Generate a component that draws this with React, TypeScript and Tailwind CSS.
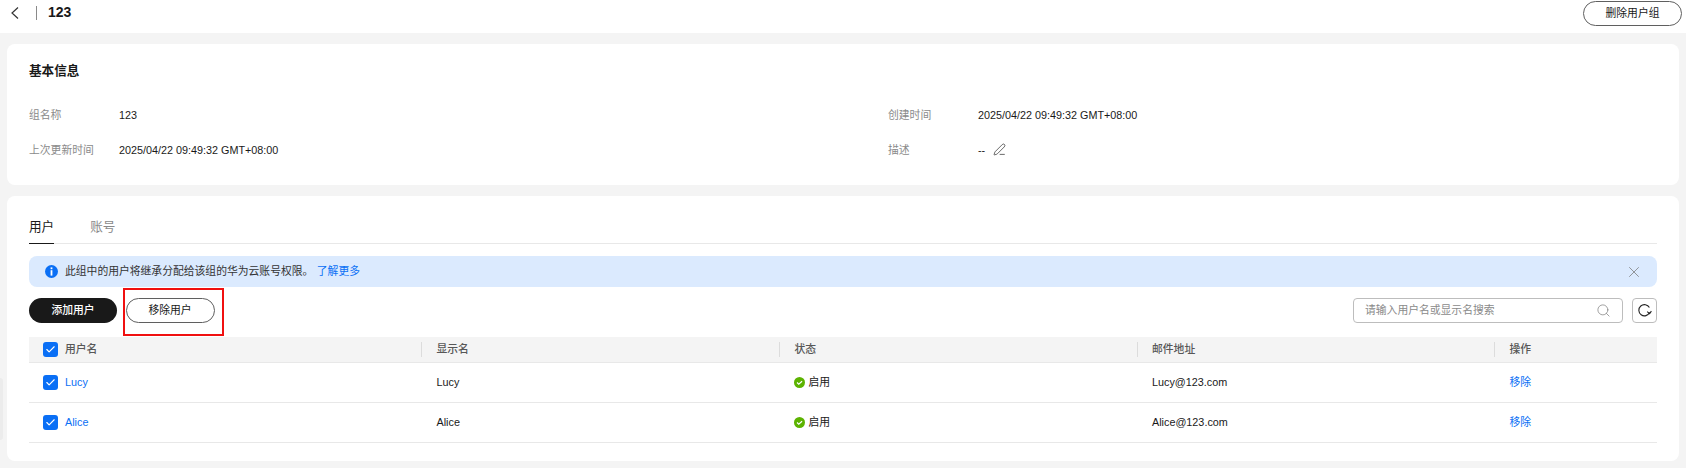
import { X, Search, Check, PenLine } from 'lucide-react';

const rows = [
  { name: 'Lucy', email: 'Lucy@123.com' },
  { name: 'Alice', email: 'Alice@123.com' },
];

const gridCols = 'grid grid-cols-[392px_358px_357.5px_357.5px_1fr]';

const CheckBox = () => (
  <span className="flex h-[15px] w-[15px] items-center justify-center rounded-[3px] bg-[#0a6ff5]">
    <Check size={11} strokeWidth={2.5} className="text-white" />
  </span>
);

const HeaderCell = ({ label }: { label: string }) => (
  <div className="flex h-full items-center">
    <span className="h-[15px] w-px bg-[#dcdcdc]" />
    <span className="pl-[14.5px] font-medium text-[#575757]">{label}</span>
  </div>
);

const InfoDot = () => (
  <svg width="13" height="13" viewBox="0 0 13 13">
    <circle cx="6.5" cy="6.5" r="6.5" fill="#0a6ff5" />
    <rect x="5.6" y="2.4" width="1.8" height="1.8" fill="#fff" />
    <rect x="5.6" y="5.2" width="1.8" height="5.4" fill="#fff" />
  </svg>
);

const StatusDot = () => (
  <svg width="11" height="11" viewBox="0 0 12 12" className="-mt-[1px]">
    <circle cx="6" cy="6" r="6" fill="#5cb300" />
    <path d="M3.3 6 L5.2 7.8 L8.8 4.6" fill="none" stroke="#fff" strokeWidth="1.3" />
  </svg>
);

const RefreshIcon = () => (
  <svg width="15" height="15" viewBox="0 0 15 15" fill="none" stroke="#222" strokeWidth="1.1">
    <path d="M12.6 9.4 A5.6 5.6 0 1 1 12.4 4.6" />
    <path d="M10.2 8.6 L12.6 10.6 L14.4 8.2" />
  </svg>
);

export default function App() {
  return (
    <div className="relative h-[468px] w-[1686px] overflow-hidden bg-[#f4f4f4] font-['Liberation_Sans','Noto_Sans_CJK_SC',sans-serif] text-[10.8px] text-[#191919]">
      {/* faint side handle at the page edge */}
      <span className="absolute left-0 top-[378px] h-[62px] w-[3px] rounded-r bg-[#ececec]" />

      {/* top bar */}
      <div className="flex h-[33px] items-start justify-between bg-white pr-1">
        <div className="flex h-[25px] items-center">
          <svg width="8" height="12" viewBox="0 0 8 12" fill="none" stroke="#333" strokeWidth="1.2" className="ml-[11px]">
            <path d="M7 0.5 L1 6 L7 11.5" />
          </svg>
          <span className="ml-[17px] h-[14px] w-px bg-[#8a8a8a]" />
          <span className="ml-[11px] text-[14px] font-bold">123</span>
        </div>
        <button className="mt-px flex h-[25px] w-[99px] items-center justify-center rounded-full border border-[#5f5f5f] bg-white">
          删除用户组
        </button>
      </div>

      {/* basic info */}
      <section className="ml-[7px] mt-[11px] h-[141px] w-[1672px] rounded-lg bg-white px-[22px] pt-[18px]">
        <h2 className="text-[12.6px] font-bold leading-[19px]">基本信息</h2>
        <div className="mt-[27px] grid grid-cols-[859px_1fr] gap-y-[20px] leading-[15px]">
          <div className="flex">
            <span className="w-[90px] text-[#8a8a8a]">组名称</span>
            <span>123</span>
          </div>
          <div className="flex">
            <span className="w-[90px] text-[#8a8a8a]">创建时间</span>
            <span>2025/04/22 09:49:32 GMT+08:00</span>
          </div>
          <div className="flex">
            <span className="w-[90px] text-[#8a8a8a]">上次更新时间</span>
            <span>2025/04/22 09:49:32 GMT+08:00</span>
          </div>
          <div className="flex items-center">
            <span className="w-[90px] text-[#8a8a8a]">描述</span>
            <span>--</span>
            <PenLine size={13} strokeWidth={1.2} className="ml-[8px] -mt-[2px]" />
          </div>
        </div>
      </section>

      {/* users card */}
      <section className="ml-[7px] mt-[11px] h-[265px] w-[1672px] rounded-lg bg-white px-[22px] pt-[20px]">
        <div className="flex h-[28px] gap-[36px] border-b border-[#e8e8e8] text-[12.6px]">
          <div className="-mb-px h-[28px] border-b border-[#191919] pt-[2px]">用户</div>
          <div className="pt-[2px] text-[#8a8a8a]">账号</div>
        </div>

        <div className="mt-[12px] flex h-[31px] items-center rounded-lg bg-[#dbeafe] pl-[16px] pr-[14px]">
          <InfoDot />
          <span className="ml-[7px] text-[#333]">此组中的用户将继承分配给该组的华为云账号权限。</span>
          <a className="ml-[3.5px] text-[#0a6ff5]">了解更多</a>
          <X size={18} strokeWidth={1} className="ml-auto text-[#777]" />
        </div>

        <div className="mt-[11px] flex h-[25px] items-center justify-between">
          <div className="flex gap-[8.5px]">
            <button className="h-[25px] w-[88px] rounded-full bg-[#191919] font-medium text-white">添加用户</button>
            <div className="relative">
              <button className="h-[25px] w-[89px] rounded-full border border-[#5f5f5f] bg-white">移除用户</button>
              {/* red highlight from the screenshot annotation */}
              <span className="absolute left-[-3px] top-[-10px] h-[47.5px] w-[101px] border-2 border-[#f01010]" />
            </div>
          </div>
          <div className="flex gap-[9px]">
            <div className="flex h-[25px] w-[270px] items-center justify-between rounded-[4px] border border-[#bdbdbd] pl-[11px] pr-[11px] text-[#8a8a8a]">
              <span>请输入用户名或显示名搜索</span>
              <Search size={15} strokeWidth={1.1} className="text-[#777]" />
            </div>
            <div className="flex h-[25px] w-[25px] items-center justify-center rounded-[4px] border border-[#bdbdbd]">
              <RefreshIcon />
            </div>
          </div>
        </div>

        {/* table */}
        <div className="mt-[14px]">
          <div className={`${gridCols} h-[26px] items-center border-b border-[#e8e8e8] bg-[#f4f4f4]`}>
            <div className="flex items-center pl-[14px]">
              <CheckBox />
              <span className="ml-[7px] font-medium text-[#575757]">用户名</span>
            </div>
            <HeaderCell label="显示名" />
            <HeaderCell label="状态" />
            <HeaderCell label="邮件地址" />
            <HeaderCell label="操作" />
          </div>
          {rows.map((row) => (
            <div key={row.name} className={`${gridCols} h-[40px] items-center border-b border-[#e8e8e8]`}>
              <div className="flex items-center pl-[14px]">
                <CheckBox />
                <a className="ml-[7px] text-[#0a6ff5]">{row.name}</a>
              </div>
              <div className="pl-[15.5px]">{row.name}</div>
              <div className="flex items-center pl-[15px]">
                <StatusDot />
                <span className="ml-[3.5px]">启用</span>
              </div>
              <div className="pl-[15.5px]">{row.email}</div>
              <a className="pl-[15.5px] text-[#0a6ff5]">移除</a>
            </div>
          ))}
        </div>
      </section>
    </div>
  );
}
